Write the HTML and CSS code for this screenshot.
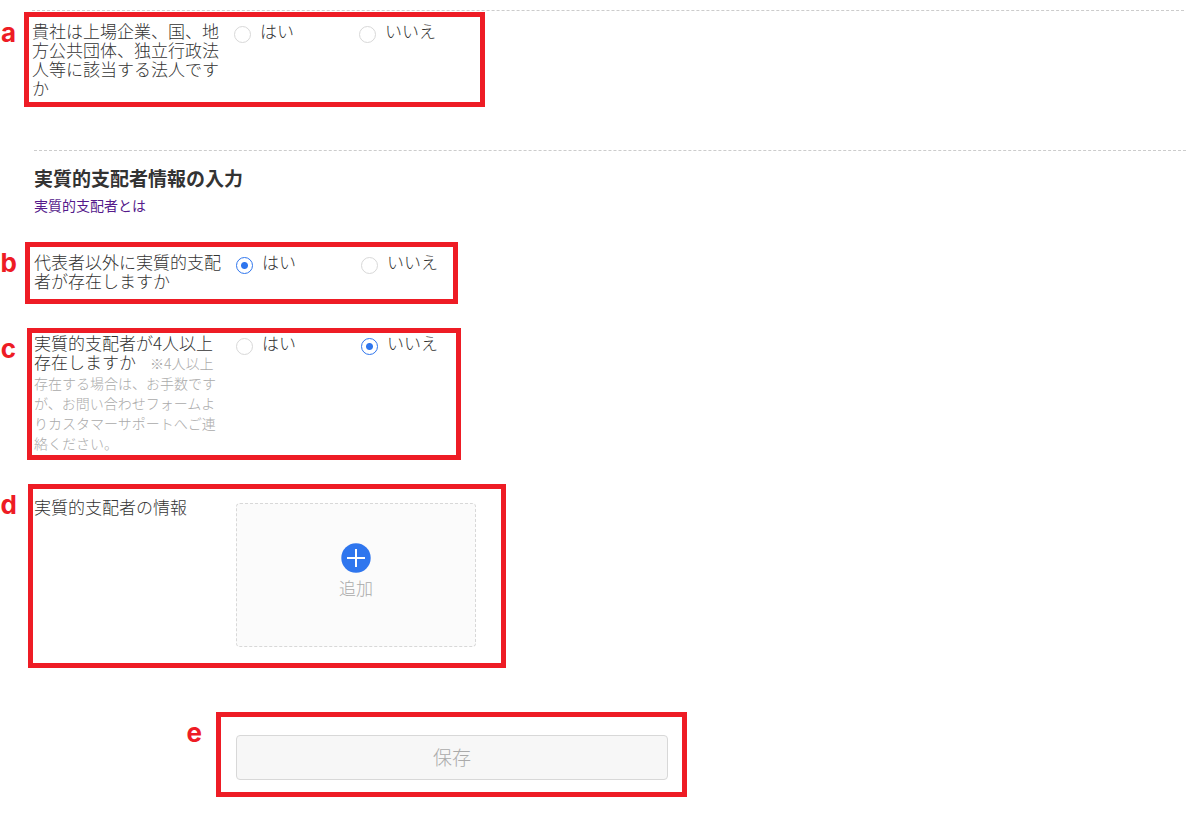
FILE: index.html
```html
<!DOCTYPE html>
<html lang="ja">
<head>
    <meta charset="UTF-8">
    <meta name="viewport" content="width=device-width, initial-scale=1.0">
    <title>実質的支配者情報の入力</title>
    <link rel="stylesheet" href="styles.css">
</head>
<body>
    <form>
        <section class="section section-company">
            <fieldset class="row" aria-labelledby="q-listed">
                <div class="row-label" id="q-listed">貴社は上場企業、国、地方公共団体、独立行政法人等に該当する法人ですか</div>
                <div class="options">
                    <label class="option"><input type="radio" name="listed" value="yes">はい</label>
                    <label class="option"><input type="radio" name="listed" value="no">いいえ</label>
                </div>
                <div class="mark mark-a"><span class="mark-letter">a</span></div>
            </fieldset>
        </section>

        <section class="section section-owner">
            <h2 class="title">実質的支配者情報の入力</h2>
            <a class="help-link" href="#">実質的支配者とは</a>

            <fieldset class="row row-exists" aria-labelledby="q-exists">
                <div class="row-label" id="q-exists">代表者以外に実質的支配者が存在しますか</div>
                <div class="options">
                    <label class="option"><input type="radio" name="exists" value="yes" checked>はい</label>
                    <label class="option"><input type="radio" name="exists" value="no">いいえ</label>
                </div>
                <div class="mark mark-b"><span class="mark-letter">b</span></div>
            </fieldset>

            <fieldset class="row row-count" aria-labelledby="q-count">
                <div class="row-label" id="q-count">実質的支配者が4人以上存在しますか<span class="hint">※4人以上存在する場合は、お手数ですが、お問い合わせフォームよりカスタマーサポートへご連絡ください。</span></div>
                <div class="options">
                    <label class="option"><input type="radio" name="count" value="yes">はい</label>
                    <label class="option"><input type="radio" name="count" value="no" checked>いいえ</label>
                </div>
                <div class="mark mark-c"><span class="mark-letter">c</span></div>
            </fieldset>

            <div class="row row-info">
                <div class="row-label">実質的支配者の情報</div>
                <button type="button" class="add-card">
                    <svg class="add-icon" width="30" height="30" viewBox="0 0 30 30" aria-hidden="true">
                        <circle cx="15" cy="15" r="14.7" fill="#2f76ee"/>
                        <path d="M15 6v18M6 15h18" stroke="#fff" stroke-width="2" fill="none"/>
                    </svg>
                    追加
                </button>
                <div class="mark mark-d"><span class="mark-letter">d</span></div>
            </div>

            <div class="row row-save">
                <button type="submit" class="save-btn" disabled>保存</button>
                <div class="mark mark-e"><span class="mark-letter">e</span></div>
            </div>
        </section>
    </form>
</body>
</html>
```

FILE: styles.css
```css
* {
    margin: 0;
    padding: 0;
    box-sizing: border-box;
}

body {
    font-family: "Noto Sans CJK JP", sans-serif;
    font-size: 17px;
    font-weight: 300;
    line-height: 19px;
    color: #333;
    background: #fff;
    padding: 10px 0 32px;
}

.section {
    border-top: 1px dashed #ccc;
}

.section-company {
    margin: 0 14px 53px 32px;
    padding-top: 10px;
}

.section-owner {
    margin: 0 12px 0 34px;
    padding-top: 17px;
}

.title {
    font-size: 19px;
    font-weight: bold;
    line-height: 20px;
    color: #333;
}

.help-link {
    display: block;
    width: fit-content;
    margin-top: 7px;
    font-size: 14px;
    font-weight: 400;
    line-height: 20px;
    color: #551a8b;
    text-decoration: none;
}

/* question on the left, answer on the right */
.row {
    position: relative;
    display: flex;
    gap: 14px;
    border: none;
    min-width: 0;
}

.row-exists {
    margin-top: 37px;
}

.row-count {
    margin-top: 43px;
}

.row-info {
    margin-top: 45px;
}

.row-save {
    margin-top: 88px;
    padding-left: 202px;
}

.row-label {
    flex: none;
    width: 188px;
}

.hint {
    margin-left: 14px;
    font-size: 14px;
    line-height: 18px;
    color: #aaa;
}

.options {
    display: flex;
}

.option {
    display: flex;
    gap: 10px;
    width: 125px;
    cursor: pointer;
}

.option input {
    appearance: none;
    flex: none;
    width: 17px;
    height: 17px;
    margin: 5px -1px 0 0;
    border: 1px solid #d8d8d8;
    border-radius: 50%;
    background: #fff;
}

.option input:checked {
    border-color: #2f76ee;
    background: radial-gradient(circle, #2f76ee 3px, #fff 4px);
}

.add-card {
    display: flex;
    flex-direction: column;
    align-items: center;
    gap: 5px;
    width: 240px;
    height: 144px;
    margin-top: 6px;
    padding-top: 39px;
    font: inherit;
    color: #aaa;
    background: #fbfbfb;
    border: 1px dashed #d8d8d8;
    border-radius: 4px;
    cursor: pointer;
}

.save-btn {
    width: 100%;
    max-width: 432px;
    height: 45px;
    padding-bottom: 2px;
    font: inherit;
    font-size: 19px;
    color: #aaa;
    background: #f7f7f7;
    border: 1px solid #d8d8d8;
    border-radius: 4px;
}

/* red callouts laid over the form */
.mark {
    position: absolute;
    border: 5px solid #ee1c25;
    pointer-events: none;
}

.mark-letter {
    position: absolute;
    top: 0;
    right: 100%;
    margin-right: 13px;
    font-family: Inter, sans-serif;
    font-size: 26px;
    font-weight: 700;
    line-height: 32px;
    color: #ee1c25;
}

.mark-a {
    top: -9px;
    left: -8px;
    width: 461px;
    height: 95px;
}

.mark-b {
    top: -10px;
    left: -9px;
    width: 433px;
    height: 62px;
}

.mark-c {
    top: -5px;
    left: -7px;
    width: 434px;
    height: 132px;
}

.mark-d {
    top: -13px;
    left: -6px;
    width: 478px;
    height: 184px;
}

.mark-e {
    top: -23px;
    left: 182px;
    width: 471px;
    height: 85px;
}

.mark-c .mark-letter,
.mark-d .mark-letter {
    margin-right: 16px;
}

.mark-e .mark-letter {
    margin-right: 19px;
}
```
